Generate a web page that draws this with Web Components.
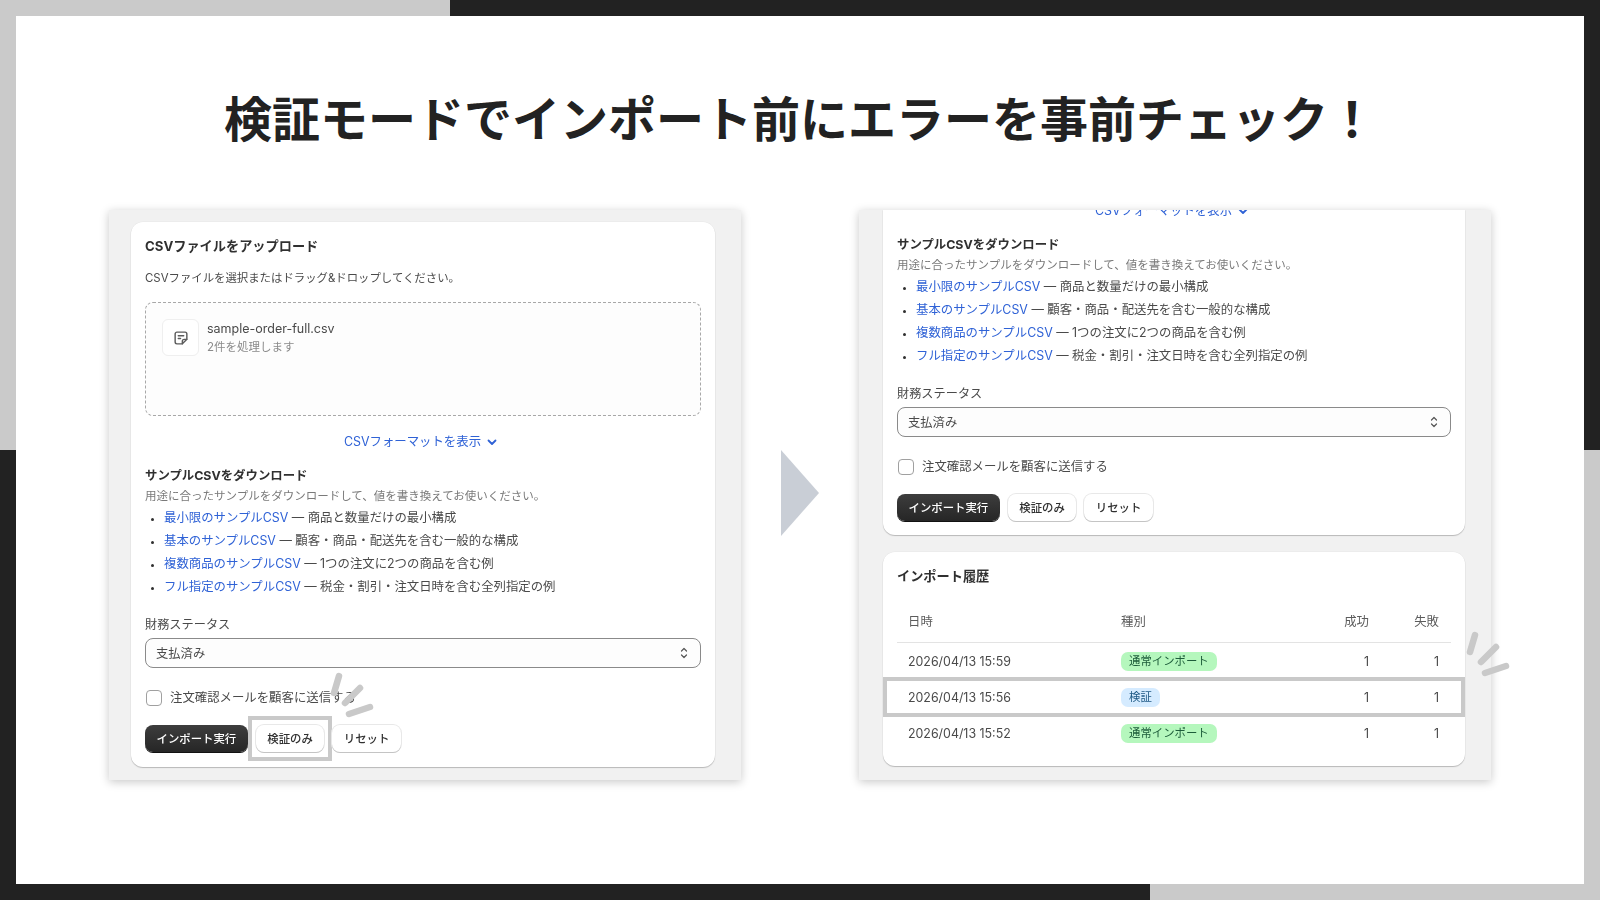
<!DOCTYPE html>
<html lang="ja">
<head>
<meta charset="utf-8">
<title>検証モード</title>
<style>
    html, body { margin: 0; padding: 0; width: 1600px; height: 900px; overflow: hidden; }
    body { font-family: Inter, "Noto Sans CJK JP", sans-serif; color: #303030; }
</style>
</head>
<body>
<slide-frame>
    <slide-title>検証モードでインポート前にエラーを事前チェック！</slide-title>
    <shot-panel style="--inset-left: 22px; --inset-right: 26px; --inset-top: 12px">
        <ui-card>
            <upload-head></upload-head>
            <sample-form mark-verify></sample-form>
        </ui-card>
        <spark-mark slot="over" style="left: 221px; top: 462px"></spark-mark>
    </shot-panel>
    <flow-arrow></flow-arrow>
    <shot-panel style="--inset-left: 24px; --inset-right: 26px; --inset-top: 0px">
        <ui-card flush>
            <sample-form clipped></sample-form>
        </ui-card>
        <ui-card>
            <history-list>
                <history-row date="2026/04/13 15:59" kind="通常インポート"></history-row>
                <history-row date="2026/04/13 15:56" kind="検証" marked></history-row>
                <history-row date="2026/04/13 15:52" kind="通常インポート"></history-row>
            </history-list>
        </ui-card>
        <spark-mark slot="over" style="left: 607px; top: 421px"></spark-mark>
    </shot-panel>
</slide-frame>

<script>
    // shared rules for every element that has text
    const baseStyle = `
        :host, * { box-sizing: border-box; }
        a { color: #2f62d6; text-decoration: none; }
        .title { font-size: 13.2px; font-weight: 700; line-height: 20px; color: #303030; }
        .strong { font-size: 12.4px; font-weight: 700; line-height: 20px; padding-top: 1px; margin-bottom: -1px; color: #303030; }
        .sub { font-size: 11.5px; line-height: 18px; color: #7a7a7a; }
    `

    class ElementBase extends HTMLElement {
        constructor() {
            super()
            this.attachShadow({ mode: 'open' })
        }
        render(css, html) {
            this.shadowRoot.innerHTML = `<style>${baseStyle}${css}</style>${html}`
        }
    }

    class SlideFrame extends ElementBase {
        connectedCallback() {
            this.render(`
                :host {
                    display: block; width: 1600px; height: 900px; padding: 16px;
                    background-color: #222;
                    background-image: linear-gradient(#cacaca, #cacaca), linear-gradient(#cacaca, #cacaca);
                    background-size: 450px 450px, 450px 450px;
                    background-position: 0 0, 100% 100%;
                    background-repeat: no-repeat;
                }
                .page {
                    height: 100%; background: #fff; padding-top: 72px;
                    display: grid; grid-template-columns: 632px 118px 632px;
                    grid-template-rows: 64px 570px; row-gap: 58px;
                    justify-content: center;
                }
            `, `<div class="page"><slot></slot></div>`)
        }
    }

    class SlideTitle extends ElementBase {
        connectedCallback() {
            this.render(`
                :host {
                    grid-column: 1 / -1; display: block; text-align: center;
                    font-size: 48px; line-height: 64px; font-weight: 700; color: #222;
                    white-space: nowrap;
                }
            `, `<slot></slot>`)
        }
    }

    class ShotPanel extends ElementBase {
        connectedCallback() {
            this.render(`
                :host { display: block; position: relative; }
                .view {
                    height: 100%; overflow: hidden; background: #f1f1f1;
                    box-shadow: 0 2px 9px rgba(0, 0, 0, .22);
                    padding: var(--inset-top) var(--inset-right) 0 var(--inset-left);
                    display: flex; flex-direction: column; gap: 17px;
                    filter: blur(.3px);
                }
            `, `<div class="view"><slot></slot></div><slot name="over"></slot>`)
        }
    }

    class UiCard extends ElementBase {
        connectedCallback() {
            this.render(`
                :host {
                    display: block; position: relative; background: #fff; border-radius: 12px;
                    box-shadow: 0 1px 1px rgba(0, 0, 0, .22), 0 0 0 .5px rgba(0, 0, 0, .04);
                    padding: 14px 14px 15px;
                }
                :host([flush]) { padding-top: 0; padding-bottom: 14.5px; border-radius: 0 0 12px 12px; }
            `, `<slot></slot>`)
        }
    }

    class UploadHead extends ElementBase {
        connectedCallback() {
            this.render(`
                :host { display: block; }
                .intro { font-size: 11.4px; line-height: 20px; color: #4a4a4a; padding-top: 1px; margin: 11px 0 14px; }
                .zone {
                    height: 114px; margin-bottom: 15px; padding: 16px;
                    border: 1px dashed #a8a8a8; border-radius: 8px; background: #fdfdfd;
                    display: flex; gap: 8px;
                }
                .thumb {
                    width: 37px; height: 37px; border: 1px solid #efefef; border-radius: 6px; background: #fff;
                    display: flex; align-items: center; justify-content: center;
                }
                .name { font-size: 12.5px; line-height: 18px; color: #4a4a4a; margin-top: 1px; }
                .sub { color: #8a8a8a; }
            `, `
                <div class="title">CSVファイルをアップロード</div>
                <div class="intro">CSVファイルを選択またはドラッグ&amp;ドロップしてください。</div>
                <div class="zone">
                    <div class="thumb">
                        <svg width="18" height="18" viewBox="0 0 20 20" fill="none" stroke="#5c5c5c" stroke-width="1.6" stroke-linejoin="round" stroke-linecap="round">
                            <path d="M5.5 3.5h9a2 2 0 0 1 2 2v6l-5 5h-6a2 2 0 0 1-2-2v-9a2 2 0 0 1 2-2z"/>
                            <path d="M11.5 16.5v-3a2 2 0 0 1 2-2h3"/>
                            <path d="M7 7.5h6M7 10.5h2.5"/>
                        </svg>
                    </div>
                    <div>
                        <div class="name">sample-order-full.csv</div>
                        <div class="sub">2件を処理します</div>
                    </div>
                </div>
            `)
        }
    }

    class SampleForm extends ElementBase {
        connectedCallback() {
            const samples = [
                ['最小限のサンプルCSV', '商品と数量だけの最小構成'],
                ['基本のサンプルCSV', '顧客・商品・配送先を含む一般的な構成'],
                ['複数商品のサンプルCSV', '1つの注文に2つの商品を含む例'],
                ['フル指定のサンプルCSV', '税金・割引・注文日時を含む全列指定の例']
            ]
            const items = samples.map(s => `<li><a href="#">${s[0]}</a> — ${s[1]}</li>`).join('')
            this.render(`
                :host { display: block; }
                .toggle {
                    display: flex; justify-content: center; align-items: center; gap: 6px;
                    font-size: 12.4px; line-height: 20px; color: #2f62d6;
                    padding: 1px 5px 0 0; margin-bottom: 13px;
                }
                :host([clipped]) .toggle { margin-top: -10.5px; }
                ul { margin: 1px 0 16.2px; padding: 0 0 0 19px; }
                li { font-size: 12.4px; line-height: 23px; color: #4a4a4a; }
                li::marker { font-size: 10px; color: #303030; }
                .sub { margin-top: 2px; }
                label { display: block; font-size: 12.2px; line-height: 20px; color: #4a4a4a; padding-top: 1px; margin-bottom: 3px; }
                .select {
                    height: 30px; padding: 0 11px 0 10px; border: 1px solid #8a8a8a; border-radius: 8px;
                    display: flex; align-items: center; justify-content: space-between;
                    font-size: 12.3px; color: #4a4a4a; background: #fdfdfd;
                }
                .check {
                    display: flex; align-items: center; gap: 8px; margin: 20px 0 17px 1px;
                    font-size: 12.4px; line-height: 20px; color: #4a4a4a;
                }
                .box { width: 16px; height: 16px; border: 1px solid #a0a0a0; border-radius: 4px; background: #fff; }
                .actions { display: flex; gap: 8px; }
            `, `
                <div class="toggle">CSVフォーマットを表示
                    <svg width="10" height="10" viewBox="0 0 10 10" fill="none" stroke="#2f62d6" stroke-width="1.8" stroke-linecap="round" stroke-linejoin="round"><path d="M1.5 3.5 5 7l3.5-3.5"/></svg>
                </div>
                <div class="strong">サンプルCSVをダウンロード</div>
                <div class="sub">用途に合ったサンプルをダウンロードして、値を書き換えてお使いください。</div>
                <ul>${items}</ul>
                <label>財務ステータス</label>
                <div class="select">支払済み
                    <svg width="10" height="16" viewBox="0 0 10 16" fill="none" stroke="#555" stroke-width="1.2" stroke-linecap="round" stroke-linejoin="round"><path d="M2.5 6 5 3.5 7.5 6M2.5 10 5 12.5 7.5 10"/></svg>
                </div>
                <div class="check"><span class="box"></span>注文確認メールを顧客に送信する</div>
                <div class="actions">
                    <ui-button primary>インポート実行</ui-button>
                    <ui-button ${this.hasAttribute('mark-verify') ? 'marked' : ''}>検証のみ</ui-button>
                    <ui-button>リセット</ui-button>
                </div>
            `)
        }
    }

    class UiButton extends ElementBase {
        connectedCallback() {
            this.render(`
                :host {
                    display: block; position: relative; height: 27px; padding: 0 11.5px;
                    font-size: 11.4px; line-height: 28px; font-weight: 500; color: #303030;
                    background: #fff; border-radius: 8px;
                    box-shadow: 0 1px 0 #c4c4c4, 0 0 0 1px #e8e8e8;
                }
                :host([primary]) {
                    color: #fff; background: linear-gradient(#3d3d3d, #262626);
                    box-shadow: 0 1px 0 #111;
                }
                .ring {
                    position: absolute; left: -7.5px; right: -7.5px; top: -9px; bottom: -9px;
                    border: 4px solid #c9c9c9;
                }
            `, `<slot></slot>${this.hasAttribute('marked') ? '<div class="ring"></div>' : ''}`)
        }
    }

    class HistoryList extends ElementBase {
        connectedCallback() {
            this.render(`
                :host { display: block; }
                .cols {
                    display: grid; grid-template-columns: 224px 1fr 71px 71px;
                    height: 41px; padding-bottom: 3px; margin-top: 16px; align-items: center;
                    font-size: 12.4px; color: #5c5c5c; border-bottom: 1px solid #e3e3e3;
                }
                .cols span:first-child { padding-left: 11px; }
                .num { text-align: right; padding-right: 11px; }
                .num:last-child { padding-right: 12px; }
            `, `
                <div class="title">インポート履歴</div>
                <div class="cols"><span>日時</span><span>種別</span><span class="num">成功</span><span class="num">失敗</span></div>
                <slot></slot>
            `)
        }
    }

    class HistoryRow extends ElementBase {
        connectedCallback() {
            const kind = this.getAttribute('kind')
            this.render(`
                :host {
                    display: grid; grid-template-columns: 224px 1fr 71px 71px; position: relative;
                    height: 36px; align-items: center; font-size: 12.4px; color: #4a4a4a;
                }
                .date { padding-left: 11px; }
                .num { text-align: right; padding-right: 11px; }
                .num:last-of-type { padding-right: 12px; }
                .ring {
                    position: absolute; left: -14px; right: -14px; top: -2px; bottom: -2px;
                    border: 4px solid #c9c9c9;
                }
            `, `
                <span class="date">${this.getAttribute('date')}</span>
                <span><status-badge ${kind === '検証' ? 'info' : ''}>${kind}</status-badge></span>
                <span class="num">1</span><span class="num">1</span>
                ${this.hasAttribute('marked') ? '<div class="ring"></div>' : ''}
            `)
        }
    }

    class StatusBadge extends ElementBase {
        connectedCallback() {
            this.render(`
                :host {
                    display: inline-block; height: 19px; padding: 0 8px; border-radius: 7px;
                    font-size: 11.4px; line-height: 19px; vertical-align: middle;
                    background: #b5f7bd; color: #1d5c3a;
                }
                :host([info]) { background: #d5ebff; color: #1f5a86; }
            `, `<slot></slot>`)
        }
    }

    class FlowArrow extends ElementBase {
        connectedCallback() {
            this.render(`
                :host { display: flex; align-items: center; justify-content: center; padding-bottom: 4px; }
            `, `<svg width="38" height="86" viewBox="0 0 38 86"><path d="M0 0 38 43 0 86z" fill="#c9ced6"/></svg>`)
        }
    }

    class SparkMark extends ElementBase {
        connectedCallback() {
            this.render(`
                :host { position: absolute; display: block; width: 50px; height: 50px; }
            `, `
                <svg width="50" height="50" viewBox="0 0 50 50" fill="none" stroke="#c9c9c9" stroke-width="6.5" stroke-linecap="round" style="display:block">
                    <path d="M9 4 4 21"/><path d="M30 16 15 31"/><path d="M40 35 19 42"/>
                </svg>
            `)
        }
    }

    customElements.define('slide-frame', SlideFrame)
    customElements.define('slide-title', SlideTitle)
    customElements.define('shot-panel', ShotPanel)
    customElements.define('ui-card', UiCard)
    customElements.define('upload-head', UploadHead)
    customElements.define('sample-form', SampleForm)
    customElements.define('ui-button', UiButton)
    customElements.define('history-list', HistoryList)
    customElements.define('history-row', HistoryRow)
    customElements.define('status-badge', StatusBadge)
    customElements.define('flow-arrow', FlowArrow)
    customElements.define('spark-mark', SparkMark)
</script>
</body>
</html>
